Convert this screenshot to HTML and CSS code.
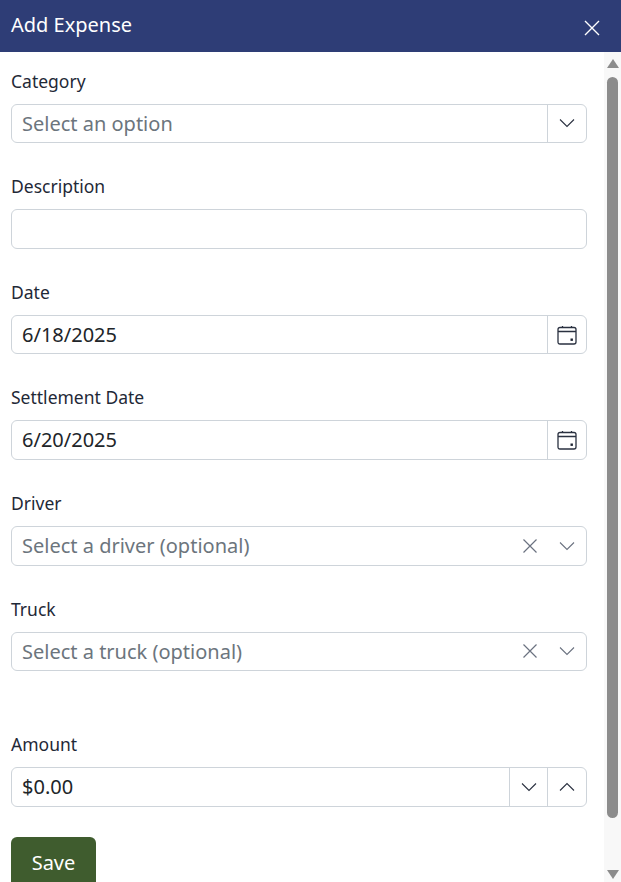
FILE: index.html
```html
<!DOCTYPE html>
<html>
  <head>
    <title>Add Expense</title>
    <link rel="stylesheet" href="styles.css">
  </head>
  <body>
    <div class="header">
      <span class="header-title">Add Expense</span>
      <svg class="close-icon" width="18" height="18" viewBox="0 0 18 18"><path d="M2 2 L16 16 M16 2 L2 16" stroke="#fff" stroke-width="1.4" fill="none"/></svg>
    </div>

    <div class="content">
      <div class="form">
        <div class="field">
          <label class="field-label">Category</label>
          <div class="input-box">
            <span class="input-text placeholder">Select an option</span>
            <span class="input-button">
              <svg width="16" height="10" viewBox="0 0 16 10"><path d="M1 1.5 L8 8.5 L15 1.5" stroke="#2a3140" stroke-width="1.1" fill="none"/></svg>
            </span>
          </div>
        </div>

        <div class="field">
          <label class="field-label">Description</label>
          <div class="input-box">
            <span class="input-text"></span>
          </div>
        </div>

        <div class="field">
          <label class="field-label">Date</label>
          <div class="input-box">
            <span class="input-text">6/18/2025</span>
            <span class="input-button">
              <svg width="20" height="20" viewBox="0 0 20 20"><path d="M3 2.5 H17 Q19 2.5 19 4.5 V17 Q19 19 17 19 H3 Q1 19 1 17 V4.5 Q1 2.5 3 2.5 Z M1 6.5 H19 M5.5 1 V3 M14.5 1 V3" stroke="#2a3140" stroke-width="1.3" fill="none"/><rect x="13.5" y="13.5" width="2.4" height="2.4" fill="#1d2433"/></svg>
            </span>
          </div>
        </div>

        <div class="field">
          <label class="field-label">Settlement Date</label>
          <div class="input-box">
            <span class="input-text">6/20/2025</span>
            <span class="input-button">
              <svg width="20" height="20" viewBox="0 0 20 20"><path d="M3 2.5 H17 Q19 2.5 19 4.5 V17 Q19 19 17 19 H3 Q1 19 1 17 V4.5 Q1 2.5 3 2.5 Z M1 6.5 H19 M5.5 1 V3 M14.5 1 V3" stroke="#2a3140" stroke-width="1.3" fill="none"/><rect x="13.5" y="13.5" width="2.4" height="2.4" fill="#1d2433"/></svg>
            </span>
          </div>
        </div>

        <div class="field">
          <label class="field-label">Driver</label>
          <div class="input-box">
            <span class="input-text placeholder">Select a driver (optional)</span>
            <span class="clear-icon">
              <svg width="14" height="14" viewBox="0 0 14 14"><path d="M0.5 0.5 L13.5 13.5 M13.5 0.5 L0.5 13.5" stroke="#6b7280" stroke-width="1.2" fill="none"/></svg>
            </span>
            <span class="input-button no-border">
              <svg width="16" height="10" viewBox="0 0 16 10"><path d="M1 1.5 L8 8.5 L15 1.5" stroke="#6b7280" stroke-width="1.1" fill="none"/></svg>
            </span>
          </div>
        </div>

        <div class="field">
          <label class="field-label">Truck</label>
          <div class="input-box">
            <span class="input-text placeholder">Select a truck (optional)</span>
            <span class="clear-icon">
              <svg width="14" height="14" viewBox="0 0 14 14"><path d="M0.5 0.5 L13.5 13.5 M13.5 0.5 L0.5 13.5" stroke="#6b7280" stroke-width="1.2" fill="none"/></svg>
            </span>
            <span class="input-button no-border">
              <svg width="16" height="10" viewBox="0 0 16 10"><path d="M1 1.5 L8 8.5 L15 1.5" stroke="#6b7280" stroke-width="1.1" fill="none"/></svg>
            </span>
          </div>
        </div>

        <div class="field amount-field">
          <label class="field-label">Amount</label>
          <div class="input-box">
            <span class="input-text">$0.00</span>
            <span class="input-button spin-down">
              <svg width="16" height="10" viewBox="0 0 16 10"><path d="M1 1.5 L8 8.5 L15 1.5" stroke="#2a3140" stroke-width="1.1" fill="none"/></svg>
            </span>
            <span class="input-button">
              <svg width="16" height="10" viewBox="0 0 16 10"><path d="M1 8.5 L8 1.5 L15 8.5" stroke="#2a3140" stroke-width="1.1" fill="none"/></svg>
            </span>
          </div>
        </div>

        <button class="save-button">Save</button>
      </div>

      <div class="scrollbar">
        <span class="arrow-up"></span>
        <span class="scroll-thumb"></span>
        <span class="arrow-down"></span>
      </div>
    </div>
  </body>
</html>
```

FILE: styles.css
```css
html, body {
  height: 100%;
}

body {
  margin: 0;
  display: flex;
  flex-direction: column;
  overflow: hidden;
  background-color: white;
  color: #1f2937;
  font-family: "Noto Sans", sans-serif;
}

.header {
  flex: none;
  height: 52px;
  box-sizing: border-box;
  padding: 0 20px 0 11px;
  display: flex;
  align-items: center;
  justify-content: space-between;
  background-color: #2e3d76;
  color: white;
}

.header-title {
  font-size: 20px;
  margin-bottom: 3px;
}

.close-icon {
  margin-top: 4px;
}

.content {
  flex: 1;
  min-height: 0;
  display: flex;
}

.form {
  flex: 1;
  min-width: 0;
  padding: 16.7px 17px 0 11px;
  overflow: hidden;
}

.field {
  margin-bottom: 31px;
}

.amount-field {
  margin-top: 60.8px;
  margin-bottom: 30px;
}

.field-label {
  display: block;
  font-size: 17.5px;
  line-height: 24px;
  margin-bottom: 11px;
}

.input-box {
  display: flex;
  align-items: stretch;
  box-sizing: content-box;
  border: 1px solid #ced4da;
  border-radius: 6px;
  height: 37.6px;
}

.input-text {
  flex: 1;
  min-width: 0;
  padding-left: 10px;
  font-size: 20px;
  line-height: 37.6px;
  color: #212529;
}

.placeholder {
  color: #6c757d;
}

.input-button {
  flex: none;
  width: 38px;
  display: flex;
  align-items: center;
  justify-content: center;
  border-left: 1px solid #ced4da;
}

.spin-down {
  width: 37px;
}

.no-border {
  border-left: none;
}

.clear-icon {
  flex: none;
  display: flex;
  align-items: center;
  padding-right: 11px;
}

.save-button {
  display: block;
  width: 85px;
  height: 52px;
  padding: 0;
  border: none;
  border-radius: 6px;
  background-color: #3f5c2e;
  color: white;
  font-family: "Noto Sans", sans-serif;
  font-size: 20px;
  cursor: pointer;
}

.scrollbar {
  flex: none;
  width: 17px;
  display: flex;
  flex-direction: column;
  align-items: center;
  background-color: #f8f8f8;
}

.arrow-up {
  margin-top: 7px;
  border-left: 6.5px solid transparent;
  border-right: 6.5px solid transparent;
  border-bottom: 9px solid #8c8c8c;
}

.arrow-down {
  margin-top: 52px;
  border-left: 6.5px solid transparent;
  border-right: 6.5px solid transparent;
  border-top: 9px solid #8c8c8c;
}

.scroll-thumb {
  margin-top: 9px;
  width: 11px;
  height: 741px;
  border-radius: 6px;
  background-color: #8c8c8c;
}
```
